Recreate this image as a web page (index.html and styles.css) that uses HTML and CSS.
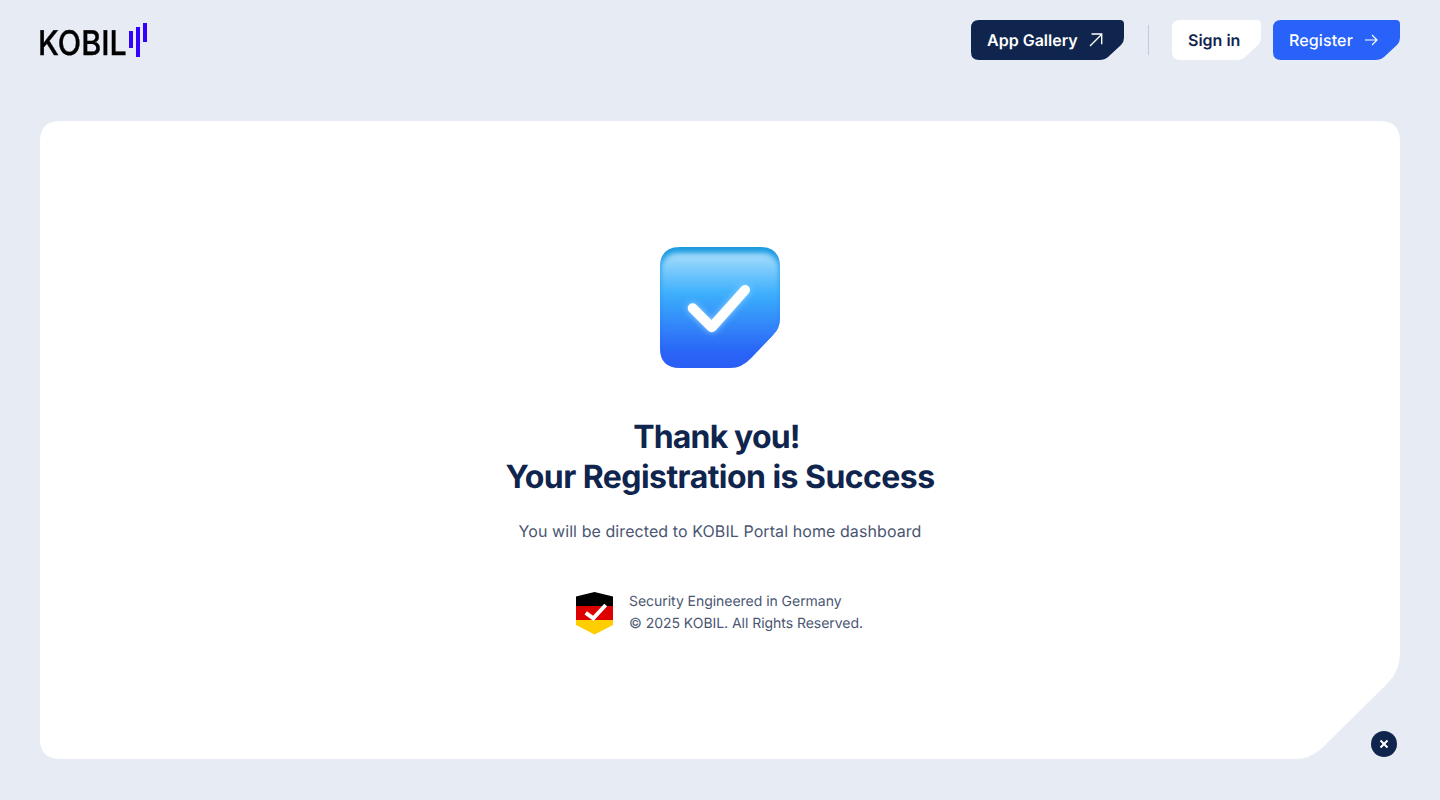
FILE: index.html
```html
<!DOCTYPE html>
<html lang="en">
<head>
<meta charset="utf-8">
<title>KOBIL Portal</title>
<link rel="stylesheet" href="styles.css">
</head>
<body>
<div class="page">
  <header class="topbar">
    <a class="logo" href="#">
      <span class="logo-word">KOBIL</span>
      <svg class="logo-bars" width="20" height="34" viewBox="0 0 20 34" aria-hidden="true">
        <rect x="1" y="8" width="4" height="17" fill="#3300ff"/>
        <rect x="8" y="4" width="4" height="30" fill="#3300ff"/>
        <rect x="15" y="0" width="4" height="19" fill="#3300ff"/>
      </svg>
    </a>
    <nav class="actions">
      <a class="btn btn-gallery" href="#">App Gallery
        <svg width="16" height="16" viewBox="0 0 16 16" fill="none" stroke="#fff" stroke-width="1.4" aria-hidden="true"><path d="M2 14 13.500 2.500M3.500 2h10.200v10.200"/></svg>
      </a>
      <span class="divider"></span>
      <a class="btn btn-signin" href="#">Sign in</a>
      <a class="btn btn-register" href="#">Register
        <svg width="16" height="16" viewBox="0 0 16 16" fill="none" stroke="#fff" stroke-width="1.2" aria-hidden="true"><path d="M2 8h12M9 3l5 5-5 5"/></svg>
      </a>
    </nav>
  </header>
  <main class="stage">
    <section class="card">
      <svg class="success-icon" width="120" height="121" viewBox="0 0 120 121" aria-hidden="true">
        <defs>
          <linearGradient id="rim" x1="0" y1="0" x2="0" y2="1">
            <stop offset="0" stop-color="#1c9ade"/>
            <stop offset=".35" stop-color="#2fa5f5"/>
            <stop offset=".85" stop-color="#2a62f6"/>
            <stop offset="1" stop-color="#2a5ff5"/>
          </linearGradient>
          <linearGradient id="fill" x1="0" y1="0" x2="0" y2="1">
            <stop offset="0" stop-color="#a6ddfc"/>
            <stop offset=".36" stop-color="#3caffc"/>
            <stop offset=".88" stop-color="#2a64f7"/>
            <stop offset="1" stop-color="#2a5ff5"/>
          </linearGradient>
          <filter id="soft" x="-10%" y="-10%" width="120%" height="120%"><feGaussianBlur stdDeviation="2.500"/></filter>
          <filter id="glow" x="-40%" y="-40%" width="180%" height="180%"><feGaussianBlur stdDeviation="3"/></filter>
          <clipPath id="shape"><path d="M20 0H100Q120 0 120 20V72Q120 81 113 88L91 111Q82 121 70 121H20Q0 121 0 101V20Q0 0 20 0Z"/></clipPath>
        </defs>
        <g clip-path="url(#shape)">
          <rect width="120" height="121" fill="url(#rim)"/>
          <rect x="1" y="6" width="118" height="113" rx="16" fill="url(#fill)" filter="url(#soft)"/>
        </g>
        <path d="M32.700 61.300 51.700 80.300 85 43" fill="none" stroke="#8fd2ff" stroke-width="10" stroke-linecap="round" stroke-linejoin="round" filter="url(#glow)"/>
        <path d="M32.700 61.300 51.700 80.300 85 43" fill="none" stroke="#fff" stroke-width="10" stroke-linecap="round" stroke-linejoin="round"/>
      </svg>
      <h1 class="title"><span class="title-first">Thank you!</span><br>Your Registration is Success</h1>
      <p class="subtitle">You will be directed to KOBIL Portal home dashboard</p>
      <div class="legal">
        <svg width="37" height="43" viewBox="0 0 37 43" aria-hidden="true">
          <defs><clipPath id="shield"><path d="M18.500 0 37 4.500V33L18.500 42.500 0 33V4.500Z"/></clipPath></defs>
          <g clip-path="url(#shield)">
            <rect width="37" height="14" fill="#000"/>
            <rect y="14" width="37" height="14" fill="#dd0000"/>
            <rect y="28" width="37" height="15" fill="#ffce00"/>
          </g>
          <path d="M9.700 20.800 17.300 26.300 29.700 13" fill="none" stroke="#fff" stroke-width="4"/>
        </svg>
        <div class="legal-text">
          <div>Security Engineered in Germany</div>
          <div>© 2025 KOBIL. All Rights Reserved.</div>
        </div>
      </div>
    </section>
    <button class="close" aria-label="Close">
      <svg width="10" height="10" viewBox="0 0 10 10" fill="none" stroke="#fff" stroke-width="2" aria-hidden="true"><path d="M1.500 1.500l7 7M8.500 1.500l-7 7"/></svg>
    </button>
  </main>
</div>
</body>
</html>
```
FILE: styles.css
```css
* { box-sizing: border-box; }
html, body { margin: 0; height: 100%; }
body {
  background: #e6ebf4;
  font-family: "Inter", "Liberation Sans", sans-serif;
  color: #10254d;
  overflow: hidden;
  text-rendering: geometricPrecision;
}
.page { padding: 20px 40px 0; }
.topbar {
  display: flex;
  align-items: flex-start;
  justify-content: space-between;
  height: 40px;
}
.logo {
  display: flex;
  align-items: flex-start;
  text-decoration: none;
  color: #000;
  height: 40px;
}
.logo-word {
  display: block;
  font-size: 34px;
  font-weight: 500;
  line-height: 40px;
  width: 90px;
  margin: 4px 0 0 -2px;
  transform: scaleX(.895);
  transform-origin: left center;
  -webkit-text-stroke: 0.4px #000;
}
.logo-bars { margin-top: 3px; }
.actions { display: flex; align-items: center; height: 40px; }
.btn {
  display: flex;
  align-items: center;
  height: 40px;
  padding-left: 16px;
  font-size: 16px;
  font-weight: 600;
  text-decoration: none;
}
.btn-gallery {
  width: 153px;
  gap: 10px;
  background: #10254d;
  color: #fff;
  clip-path: path("M8 0H149Q153 0 153 4V18Q153 22 150 25L137 37Q134 40 128 40H8Q0 40 0 32V8Q0 0 8 0Z");
}
.divider { width: 1px; height: 30px; background: #c3cad9; margin: 0 23px 0 24px; }
.btn-signin {
  width: 89px;
  margin-right: 12px;
  background: #fff;
  color: #10254d;
  clip-path: path("M8 0H85Q89 0 89 4V18Q89 22 86 25L73 37Q70 40 64 40H8Q0 40 0 32V8Q0 0 8 0Z");
}
.btn-register {
  width: 127px;
  gap: 10px;
  background: #2962f9;
  color: #fff;
  font-weight: 500;
  letter-spacing: 0.12px;
  clip-path: path("M8 0H123Q127 0 127 4V18Q127 22 124 25L111 37Q108 40 102 40H8Q0 40 0 32V8Q0 0 8 0Z");
}
.stage { position: relative; margin-top: 61px; }
.card {
  width: 1360px;
  height: 638px;
  background: #fff;
  clip-path: path("M20 0H1340Q1360 0 1360 20V532Q1360 550 1347 563L1281 628Q1270 638 1255 638H20Q0 638 0 618V20Q0 0 20 0Z");
  display: flex;
  flex-direction: column;
  align-items: center;
  padding-top: 126px;
}
.success-icon { display: block; }
.title {
  margin: 49px 0 0;
  font-size: 32px;
  line-height: 40px;
  font-weight: 700;
  letter-spacing: -0.55px;
  text-align: center;
  color: #10254d;
}
.title-first { padding-right: 7px; letter-spacing: -0.85px; }
.subtitle {
  margin: 22px 0 0;
  font-size: 16px;
  line-height: 24px;
  letter-spacing: 0.08px;
  color: #4a5672;
}
.legal {
  display: flex;
  align-items: flex-start;
  gap: 16px;
  margin: 48px 1px 0 0;
}
.legal svg { margin-top: 1px; }
.legal-text { font-size: 14px; line-height: 22px; letter-spacing: -0.04px; color: #4a5672; }
.close {
  position: absolute;
  left: 1331px;
  top: 610px;
  width: 26px;
  height: 26px;
  padding: 0;
  border: 0;
  border-radius: 50%;
  background: #10254d;
  display: flex;
  align-items: center;
  justify-content: center;
}
```
